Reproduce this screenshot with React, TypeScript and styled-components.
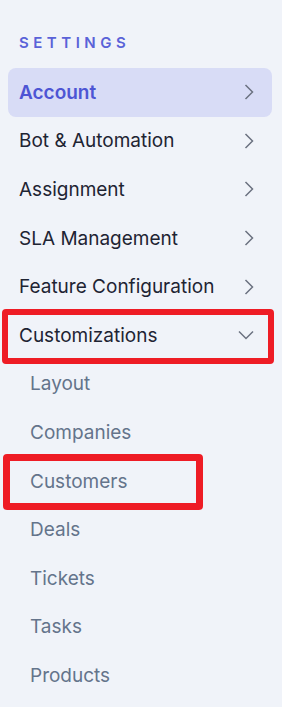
import React from "react";
import styled, { createGlobalStyle } from "styled-components";

const Global = createGlobalStyle`
  html, body { margin: 0; padding: 0; background: #f0f3f9; }
  body { font-family: Inter, "Noto Sans", sans-serif; }
`;

const Sidebar = styled.nav`
  width: 282px;
  height: 707px;
  box-sizing: border-box;
  background: #f0f3f9;
  padding: 34px 10px 0 8px;
  overflow: hidden;
`;

const Heading = styled.div`
  padding-left: 11px;
  font-size: 15px;
  font-weight: 600;
  letter-spacing: 0.3em;
  color: #5a62d8;
  line-height: 18px;
  margin-bottom: 16px;
`;

const List = styled.div`
  display: flex;
  flex-direction: column;
  position: relative;
`;

const Row = styled.div<{ $active?: boolean; $sub?: boolean }>`
  display: flex;
  align-items: center;
  justify-content: space-between;
  height: 48.6px;
  box-sizing: border-box;
  padding: 0 18px 0 ${(p) => (p.$sub ? 22 : 11)}px;
  border-radius: 8px;
  background: ${(p) => (p.$active ? "#d8dcf6" : "transparent")};
  color: ${(p) => (p.$active ? "#4d55d4" : p.$sub ? "#64748b" : "#1e2433")};
  font-size: 19px;
  font-weight: ${(p) => (p.$active ? 600 : 400)};
  position: relative;
`;

const Highlight = styled.span<{ $right: number; $top: number; $bottom: number; $left: number; $w: number }>`
  position: absolute;
  left: ${(p) => p.$left}px;
  right: ${(p) => p.$right}px;
  top: ${(p) => p.$top}px;
  bottom: ${(p) => p.$bottom}px;
  border: ${(p) => p.$w}px solid #ee1c25;
  border-radius: 4px;
  pointer-events: none;
`;

const Chevron = ({ down }: { down?: boolean }) =>
  down ? (
    <svg width="16" height="10" viewBox="0 0 16 10" fill="none">
      <polyline points="1,1.5 8,8.5 15,1.5" stroke="#6b7280" strokeWidth="1.5" />
    </svg>
  ) : (
    <svg width="10" height="16" viewBox="0 0 10 16" fill="none">
      <polyline points="1.5,1 8.5,8 1.5,15" stroke="#6b7280" strokeWidth="1.5" />
    </svg>
  );

const main = ["Account", "Bot & Automation", "Assignment", "SLA Management", "Feature Configuration"];
const subs = ["Layout", "Companies", "Customers", "Deals", "Tickets", "Tasks", "Products"];

export default function App() {
  return (
    <>
      <Global />
      <Sidebar>
        <Heading>SETTINGS</Heading>
        <List>
          {main.map((m, i) => (
            <Row key={m} $active={i === 0}>
              <span>{m}</span>
              <Chevron />
            </Row>
          ))}
          <Row>
            <span>Customizations</span>
            <Chevron down />
            <Highlight $left={-6} $right={-2} $top={-2} $bottom={-4} $w={6} />
          </Row>
          {subs.map((s) => (
            <Row key={s} $sub>
              {s}
              {s === "Customers" && <Highlight $left={-5} $right={69} $top={-3} $bottom={-5} $w={7} />}
            </Row>
          ))}
        </List>
      </Sidebar>
    </>
  );
}
